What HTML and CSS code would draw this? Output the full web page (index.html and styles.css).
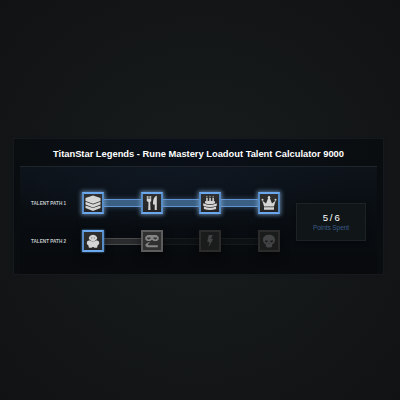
FILE: index.html
```html
<!DOCTYPE html>
<html lang="en">
<head>
<meta charset="utf-8">
<title>Talent Calculator</title>
<link rel="stylesheet" href="styles.css">
</head>
<body>
<main class="panel">
  <h1 class="title">TitanStar Legends - Rune Mastery Loadout Talent Calculator 9000</h1>
  <div class="content">
    <div class="paths">
      <div class="path">
        <span class="label">Talent Path 1</span>
        <div class="track">
          <div class="node active linked"><svg viewBox="0 0 16 16"><path d="M8 .5 15.500 3V5.900L8 8.800.5 5.900V3z"/><path d="M.5 6.800 8 9.500 15.500 6.800v2.600L8 12.400.5 9.400z"/><path d="M.5 10.400 8 13.100l7.500-2.700v2.600L8 15.900.5 13z"/></svg></div>
          <div class="link lit"></div>
          <div class="node active linked"><svg viewBox="0 0 16 16"><path d="M2.800 1h1v3h.7V1h1v3h.7V1h1v5L6.200 7.300 6.500 15H4.200L4.500 7.300 2.800 6z"/><path d="M12.800.7V15h-2.100V9.500H9C8.900 5 9.900 1.500 12.800.7z"/></svg></div>
          <div class="link lit"></div>
          <div class="node active linked"><svg viewBox="0 0 16 16"><path d="M4.200 3h1.500v3H4.200zM7.300 3h1.500v3H7.300zM10.400 3h1.500v3h-1.500zM4.900.7 5.700 2.300H4.100zM8 .7l.8 1.600H7.200zM11.100.7l.8 1.600h-1.600z"/><path d="M3 6.300Q8 5 13 6.300v2Q8 10 3 8.300z"/><path d="M1.200 8.300Q8 11.500 14.800 8.300v2.500Q8 13.400 1.200 10.800z"/><path d="M1.900 11.600Q8 14 14.100 11.600V14Q8 16.200 1.900 14z"/></svg></div>
          <div class="link lit"></div>
          <div class="node active linked"><svg viewBox="0 0 16 16"><path d="m3.100 11.500L1.300 5.500 5 8.500 7.200 3h1.600L11 8.500l3.700-3L12.900 11.500zM3 12.200h10v2.500H3z"/><circle cx="1.500" cy="4.700" r="1"/><circle cx="8" cy="2.300" r="1.200"/><circle cx="14.500" cy="4.700" r="1"/></svg></div>
        </div>
      </div>
      <div class="path">
        <span class="label">Talent Path 2</span>
        <div class="track">
          <div class="node active"><svg viewBox="0 0 16 16"><path fill-rule="evenodd" d="M3.900 6V4.300Q5 1.700 8 1.700t4.100 2.600V6L9.800 8H6.200zM5.600 4.700l1.300.8.500-.7zM10.400 4.700l-1.300.8-.5-.7z"/><path d="M2 8.600 4.300 7.300 6.500 8.200h3l2.200-.9L14 8.600l.2 2.300-1.500 1.400-.6 2.500H9.300L8 13.800l-1.300 1H3.900l-.6-2.500-1.500-1.400z"/></svg></div>
          <div class="link open"></div>
          <div class="node open"><svg viewBox="0 0 16 16"><path fill-rule="evenodd" d="M3.500 2h9l2.200 2v2.400L13 8H9.600L8 6.800 6.400 8H3L1.300 6.400V4zM3.200 4.500v1.300l1.200.6 1.800-.7.600-1.200zM9.200 4.500l.6 1.200 1.800.7 1.200-.6V4.500z"/><path d="M1.500 11.200 4.500 9.300H6L4 11.200v1.100h9.800v1.900H3.300L1.500 13z"/></svg></div>
          <div class="link off"></div>
          <div class="node off"><svg viewBox="0 0 16 16"><path d="M6.700 2h4L9.200 6h2L6.500 14.200 7.500 9H5.200z"/></svg></div>
          <div class="link off"></div>
          <div class="node off"><svg viewBox="0 0 16 16"><path fill-rule="evenodd" d="M8 1.700c3.800 0 6 2 6 5 0 1.600-.6 2.600-1.300 3.700l-1.300.7-.5 2.700-1.300.7H6.400l-1.300-.7-.5-2.700-1.300-.7C2.600 9.300 2 8.300 2 6.700c0-3 2.200-5 6-5zM4 7.400v1.400l1.500.7 1.300-.8-.2-1.300zM9.400 7.400l-.2 1.300 1.300.8 1.500-.7V7.400zM8 9.600l-.7 1.200h1.400z"/></svg></div>
        </div>
      </div>
    </div>
    <aside class="points"><strong class="count">5 / 6</strong><span class="caption">Points Spent</span></aside>
  </div>
</main>
</body>
</html>
```
FILE: styles.css
```css
* { box-sizing: border-box; }

body {
  margin: 0;
  width: 400px;
  height: 400px;
  padding: 138px 16px 0 13px;
  overflow: hidden;
  font-family: "Liberation Sans", Arial, sans-serif;
  color: #fff;
  background: radial-gradient(circle at 50% 50%, #191d1e 0, #151819 45%, #101214 100%);
}

.panel {
  width: 371px;
  height: 137px;
  padding: 0 6px;
  border: 1px solid #15191d;
  background: radial-gradient(ellipse 190px 90px at 48% 0, #0a101a, #0a0f14 60%, #0a0d0f);
  box-shadow: 0 0 2px #14171b;
}

.title {
  margin: 0;
  height: 27px;
  line-height: 30px;
  font-size: 9.33px;
  font-weight: 700;
  text-align: center;
  white-space: nowrap;
}

.content {
  display: flex;
  align-items: flex-start;
  height: 108px;
  padding-left: 11px;
  border-top: 1px solid #1f262b;
  background:
    radial-gradient(ellipse 190px 65px at 42% 0, #0f1722, rgba(12, 18, 26, 0)),
    linear-gradient(#0d1319 0, #0a0f14 32%, #080c10 65%, #080a0c 100%);
}

.paths {
  display: flex;
  flex-direction: column;
  gap: 16px;
  padding-top: 25px;
}

.path { display: flex; align-items: center; }

.label {
  width: 51px;
  font-size: 4.67px;
  font-weight: 700;
  line-height: 7px;
  text-transform: uppercase;
  color: #c2c6c9;
  white-space: nowrap;
}

.track { display: flex; align-items: center; width: 198px; }

.node {
  position: relative;
  flex: none;
  width: 22px;
  height: 22px;
  padding: 1px;
  border: 2px solid;
  background: linear-gradient(#303030, #252525);
  box-shadow: 0 5px 8px rgba(0, 0, 0, .55);
}

.node svg { display: block; width: 16px; height: 16px; fill: #d5d5d5; }

.node.active {
  z-index: 1;
  border-color: #6ba8ed #588cc6 #6ba8ed;
  box-shadow: 0 0 2px #507eae, 0 5px 8px rgba(0, 0, 0, .55);
}

.node.linked { box-shadow: 0 0 4px 1px rgba(125, 165, 210, .7); }
.node.open { border-color: #5c5c5c; background: #303030; }
.node.open svg { fill: #858585; }
.node.off { border-color: #2b2b2b; background: #1a1b1b; }
.node.off svg { fill: #424344; }

.link { flex: 1; height: 7px; border: solid; border-width: 1px 0; }

.link.lit {
  height: 8px;
  border-color: #6095d3;
  background: #3a5f83;
  box-shadow: 0 0 4px 1px rgba(62, 92, 125, .6);
}

.link.open { border-color: #4b4b4b; background: #292b2c; }
.link.off { border-color: #171a1c; background: #0e1113; }

.points {
  display: flex;
  flex-direction: column;
  align-items: center;
  width: 70px;
  height: 38px;
  margin: 36px 0 0 16px;
  padding-top: 9px;
  border: 1px solid #1d2225;
  background: #101517;
  box-shadow: 0 2px 4px rgba(0, 0, 0, .3);
}

.count { font-size: 9.6px; line-height: 10px; font-weight: 400; letter-spacing: -.4px; }
.caption { margin-top: 1px; font-size: 6.6px; line-height: 8px; letter-spacing: -.12px; color: #3b5a86; }
```
